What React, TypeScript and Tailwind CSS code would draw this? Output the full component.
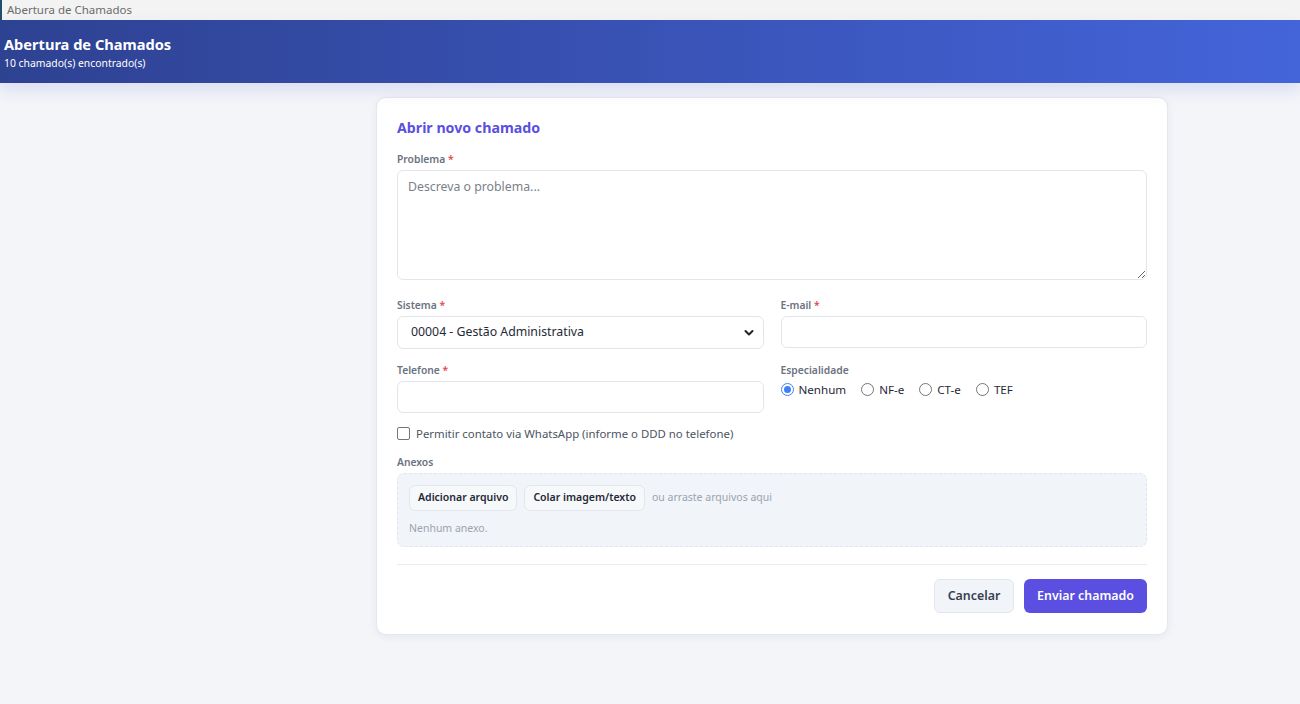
import React, { useState } from 'react';

const font = { fontFamily: '"Segoe UI", "Noto Sans", "Open Sans", sans-serif' };

const Label: React.FC<{ text: string; required?: boolean }> = ({ text, required }) => (
  <label className="block text-[10.3px] font-semibold text-[#6b7280] mb-[4px] leading-[14px]">
    {text}
    {required && <span className="text-[#e5484d]"> *</span>}
  </label>
);

const RadioDot: React.FC<{ checked?: boolean }> = ({ checked }) => (
  <span
    className={
      checked
        ? 'w-[13px] h-[13px] rounded-full border border-[#3b82f6] flex items-center justify-center bg-white'
        : 'w-[13px] h-[13px] rounded-full border border-[#767676] bg-white'
    }
  >
    {checked && <span className="w-[7px] h-[7px] rounded-full bg-[#3b82f6]" />}
  </span>
);

export default function App() {
  const [esp, setEsp] = useState('Nenhum');

  return (
    <div className="min-h-screen bg-[#f4f5f9] text-[#1f2937]" style={font}>
      {/* window title strip */}
      <div className="h-[20px] bg-[#f3f3f3] flex items-center border-l-2 border-[#1f4f6b] pl-[5px]">
        <span className="text-[11.5px] text-[#6b6b6b] leading-none">Abertura de Chamados</span>
      </div>

      {/* header */}
      <header className="h-[63px] bg-gradient-to-r from-[#2e4292] to-[#4464da] px-[4px] flex flex-col justify-center shadow-[0_8px_14px_rgba(70,90,200,0.14)] relative z-10">
        <h1 className="text-white text-[14.6px] font-bold leading-[20px] mt-[1px]">Abertura de Chamados</h1>
        <p className="text-white text-[10.4px] leading-[14px] mt-[2px]">10 chamado(s) encontrado(s)</p>
      </header>

      <div className="flex">
        {/* collapsed sidebar area */}
        <aside className="w-[244px] shrink-0" />

        <main className="flex-1 flex justify-center pt-[14px] pb-10">
          <div className="w-[792px] bg-white rounded-[10px] border border-[#e5e7ef] shadow-[0_2px_8px_rgba(30,40,90,0.06)] px-[20px] pt-[20px] pb-[21px]">
            <h2 className="text-[14.2px] font-bold text-[#5b4fe0] leading-[20px] mb-[14px]">Abrir novo chamado</h2>

            <Label text="Problema" required />
            <textarea
              placeholder="Descreva o problema..."
              className="block w-full h-[110px] rounded-[6px] border border-[#e2e5ee] px-[10px] py-[7px] text-[12.3px] placeholder:text-[#7b7f88] outline-none resize-y"
            />

            <div className="grid grid-cols-2 gap-x-[17px] mt-[18px]">
              <div>
                <Label text="Sistema" required />
                <div className="relative">
                  <select className="appearance-none block w-full h-[33px] rounded-[6px] border border-[#e2e5ee] pl-[13px] pr-8 text-[12.3px] text-[#1f2937] bg-white outline-none">
                    <option>00004 - Gestão Administrativa</option>
                  </select>
                  <svg className="absolute right-[10px] top-[13px] pointer-events-none" width="10" height="8" viewBox="0 0 10 8">
                    <path d="M1.5 2 L5 5.5 L8.5 2" fill="none" stroke="#222" strokeWidth="2" strokeLinecap="round" strokeLinejoin="round" />
                  </svg>
                </div>
              </div>
              <div>
                <Label text="E-mail" required />
                <input className="block w-full h-[32px] rounded-[6px] border border-[#e2e5ee] px-[10px] text-[12.3px] outline-none" />
              </div>

              <div className="mt-[14px]">
                <Label text="Telefone" required />
                <input className="block w-full h-[32px] rounded-[6px] border border-[#e2e5ee] px-[10px] text-[12.3px] outline-none" />
              </div>
              <div className="mt-[14px]">
                <Label text="Especialidade" />
                <div className="flex items-center gap-[15px] text-[11.6px] text-[#1f2937] mt-[3px]">
                  {['Nenhum', 'NF-e', 'CT-e', 'TEF'].map((o) => (
                    <button key={o} type="button" onClick={() => setEsp(o)} className="flex items-center gap-[5px]">
                      <RadioDot checked={esp === o} />
                      <span>{o}</span>
                    </button>
                  ))}
                </div>
              </div>
            </div>

            <label className="flex items-center gap-[6px] mt-[12px] text-[11.4px] text-[#4b5563]">
              <span className="w-[13px] h-[13px] rounded-[2px] border border-[#767676] bg-white" />
              Permitir contato via WhatsApp (informe o DDD no telefone)
            </label>

            <div className="mt-[13px]">
              <Label text="Anexos" />
              <div className="rounded-[7px] border border-dashed border-[#e1e5ec] bg-[#f1f4f8] px-[11px] pt-[11px] pb-[11px]">
                <div className="flex items-center gap-[7px]">
                  <button className="h-[26px] px-[8px] rounded-[6px] border border-[#e2e6ee] bg-[#f7f8fa] text-[10.5px] font-semibold text-[#1f2937]">
                    Adicionar arquivo
                  </button>
                  <button className="h-[26px] px-[8px] rounded-[6px] border border-[#e2e6ee] bg-[#f7f8fa] text-[10.5px] font-semibold text-[#1f2937]">
                    Colar imagem/texto
                  </button>
                  <span className="text-[10.5px] text-[#9ca3af]">ou arraste arquivos aqui</span>
                </div>
                <p className="text-[10.5px] text-[#9ca3af] mt-[10px] leading-[14px]">Nenhum anexo.</p>
              </div>
            </div>

            <div className="border-t border-[#e9ebf1] mt-[17px] pt-[14px] flex justify-end gap-[10px]">
              <button className="h-[34px] w-[80px] rounded-[6px] border border-[#e2e6ee] bg-[#f1f4f8] text-[12.4px] font-semibold text-[#374151]">
                Cancelar
              </button>
              <button className="h-[34px] w-[123px] rounded-[6px] bg-[#5a4fe0] text-[12.4px] font-semibold text-white">
                Enviar chamado
              </button>
            </div>
          </div>
        </main>
      </div>
    </div>
  );
}
